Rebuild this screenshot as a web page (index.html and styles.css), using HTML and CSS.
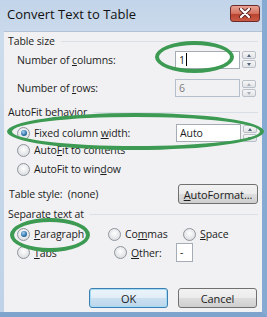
FILE: index.html
```html
<!DOCTYPE html>
<html lang="en">
  <head>
    <meta charset="UTF-8" />
    <title>Convert Text to Table</title>
    <link rel="stylesheet" href="styles.css">
  </head>
  <body>
    <div class="window">
      <div class="titlebar">
        <span class="title">Convert Text to Table</span>
        <span class="close">
          <svg width="16" height="10" viewBox="0 0 16 10">
            <path d="M4 1 L12 9 M12 1 L4 9" stroke="#5a2020" stroke-width="4" stroke-linecap="round" />
            <path d="M4 1 L12 9 M12 1 L4 9" stroke="#ffffff" stroke-width="2.2" stroke-linecap="round" />
          </svg>
        </span>
      </div>

      <div class="client">
        <div class="group h18"><span>Table size</span><i class="rule"></i></div>

        <div class="row h19">
          <span class="label">Number of <u>c</u>olumns:</span>
          <span class="spin">
            <span class="field">1<b class="caret"></b></span>
            <span class="arrows"><span class="up"></span><span class="down"></span></span>
          </span>
        </div>

        <div class="row h18 mt10">
          <span class="label">Number of <u>r</u>ows:</span>
          <span class="spin off">
            <span class="field">6</span>
            <span class="arrows"><span class="up"></span><span class="down"></span></span>
          </span>
        </div>

        <div class="group h18 mt6"><span>AutoFit behavior</span><i class="rule"></i></div>

        <div class="row h18 mt3">
          <span class="radio on"></span>
          <span class="opt">Fixed column <u>w</u>idth:</span>
          <span class="spin wide">
            <span class="field">Auto</span>
            <span class="arrows"><span class="up"></span><span class="down"></span></span>
          </span>
        </div>
        <div class="row h16">
          <span class="radio"></span>
          <span class="opt">Auto<u>F</u>it to contents</span>
        </div>
        <div class="row h16 mt3">
          <span class="radio"></span>
          <span class="opt">AutoFit to win<u>d</u>ow</span>
        </div>

        <div class="row h20 mt7 style-row">
          <span class="plain">Table style:&nbsp; (none)</span>
          <span class="button small"><u>A</u>utoFormat...</span>
        </div>

        <div class="group h16 mt2"><span>Separate text at</span><i class="rule"></i></div>

        <div class="row h18 mt3">
          <span class="cell c1"><span class="radio on"></span><span class="opt"><u>P</u>aragraph</span></span>
          <span class="cell c2"><span class="radio"></span><span class="opt">Co<u>m</u>mas</span></span>
          <span class="cell"><span class="radio"></span><span class="opt"><u>S</u>pace</span></span>
        </div>
        <div class="row h19">
          <span class="cell c1"><span class="radio"></span><span class="opt"><u>T</u>abs</span></span>
          <span class="cell c2"><span class="radio"></span><span class="opt"><u>O</u>ther:</span></span>
          <span class="other">-</span>
        </div>

        <div class="buttons">
          <span class="button default">OK</span>
          <span class="button">Cancel</span>
        </div>
      </div>

      <div class="mark m1"></div>
      <div class="mark m2"></div>
      <div class="mark m3"></div>
    </div>
  </body>
</html>
```

FILE: styles.css
```css
body {
  margin: 0;
  background: #ffffff;
  font-family: "Open Sans", "Noto Sans", sans-serif;
  font-size: 10.5px;
  letter-spacing: -0.1px;
  color: #1c1c1c;
}
u {
  text-decoration: underline;
  text-underline-offset: 1px;
}
.window {
  position: relative;
  width: 267px;
  height: 317px;
  box-sizing: border-box;
  background: linear-gradient(#c2d4e9, #cddcec 40px, #bfd2e7);
  border-right: 5px solid #86aad2;
  border-bottom: 5px solid #7ea4cd;
  display: flex;
  flex-direction: column;
}
.titlebar {
  height: 31px;
  display: flex;
  align-items: center;
  justify-content: space-between;
  padding: 0 2px 0 7px;
}
.title {
  font-size: 13px;
  letter-spacing: 0;
  color: #111;
  margin-top: -3px;
}
.close {
  width: 28px;
  height: 15px;
  margin-top: -5px;
  border: 1px solid #6b2b2b;
  border-radius: 3px;
  background: linear-gradient(#e8a394, #d4725f 50%, #b8412c 51%, #c95a45);
  display: flex;
  align-items: center;
  justify-content: center;
}
.client {
  flex: 1;
  margin-left: 4px;
  background: #f1f1f3;
  border-top: 1px solid #b2c3d6;
  padding: 0 4px 0 4px;
}
.group {
  display: flex;
  align-items: center;
  gap: 6px;
}
.rule {
  flex: 1;
  height: 1px;
  background: #d9dfe6;
}
.row {
  display: flex;
  align-items: center;
  padding-left: 9px;
}
.h16 { height: 16px; }
.h18 { height: 18px; }
.h19 { height: 19px; }
.h20 { height: 20px; }
.mt2 { margin-top: 2px; }
.mt3 { margin-top: 3px; }
.mt6 { margin-top: 6px; }
.mt7 { margin-top: 7px; }
.mt10 { margin-top: 10px; }
.label {
  width: 158px;
}
.spin {
  display: flex;
  align-items: center;
  gap: 2px;
  width: 81px;
}
.spin .field {
  box-sizing: border-box;
  width: 65px;
  height: 18px;
  border: 1px solid #a5acb5;
  background: #ffffff;
  padding-left: 3px;
  line-height: 16px;
  display: flex;
  align-items: center;
}
.spin.off .field {
  color: #7c7c7c;
  background: #f1f1f3;
  border-color: #b6c0cc;
}
.caret {
  display: inline-block;
  width: 1px;
  height: 13px;
  background: #000;
  margin-left: 1px;
}
.arrows {
  display: flex;
  flex-direction: column;
  gap: 1px;
}
.arrows span {
  box-sizing: border-box;
  width: 14px;
  height: 8px;
  border: 1px solid #b9c0c9;
  border-radius: 2px;
  background: linear-gradient(#f6f6f6, #e2e3e6);
  position: relative;
}
.arrows span::after {
  content: "";
  position: absolute;
  left: 4px;
  border-left: 2.5px solid transparent;
  border-right: 2.5px solid transparent;
}
.arrows .up::after {
  top: 2px;
  border-bottom: 3px solid #56657c;
}
.arrows .down::after {
  top: 2px;
  border-top: 3px solid #56657c;
}
.off .arrows span::after {
  border-bottom-color: #a9b1bc;
  border-top-color: #a9b1bc;
}
.radio {
  box-sizing: border-box;
  width: 13px;
  height: 13px;
  border-radius: 50%;
  border: 1px solid #8f959c;
  background: radial-gradient(circle at 50% 40%, #ffffff, #dfe1e4 70%);
  flex: none;
  position: relative;
}
.radio.on::after {
  content: "";
  position: absolute;
  left: 2.5px;
  top: 2.5px;
  width: 6px;
  height: 6px;
  border-radius: 50%;
  background: radial-gradient(circle at 40% 35%, #a6d2f2, #2a6fa8 60%, #17406a);
}
.opt {
  margin-left: 4px;
}
.row .opt + .spin {
  margin-left: auto;
  margin-right: 1px;
}
.style-row {
  padding-left: 1px;
  justify-content: space-between;
}
.button {
  box-sizing: border-box;
  display: flex;
  align-items: center;
  justify-content: center;
  width: 79px;
  height: 20px;
  border: 1px solid #707070;
  border-radius: 3px;
  background: linear-gradient(#f2f2f2, #ebebeb 50%, #dddddd 51%, #cfcfcf);
  font-size: 11px;
}
.button.small {
  width: 80px;
}
.button.default {
  border-color: #3c7fb1;
  box-shadow: inset 0 0 0 1px #a6dbf5;
  background: linear-gradient(#ecf4fa, #e1edf7 50%, #cae0f1 51%, #bcd6ea);
}
.cell {
  display: flex;
  align-items: center;
  width: 80px;
}
.cell.c1 {
  width: 97px;
}
.other {
  box-sizing: border-box;
  width: 17px;
  height: 19px;
  border: 1px solid #a5acb5;
  background: #ffffff;
  padding-left: 3px;
  margin-left: -18px;
  line-height: 16px;
}
.buttons {
  display: flex;
  gap: 10px;
  margin-top: 26px;
  padding-left: 81px;
}
.mark {
  position: absolute;
  box-sizing: border-box;
  border: 4px solid #3c9a52;
  border-radius: 50%;
}
.m1 {
  left: 155px;
  top: 41px;
  width: 79px;
  height: 32px;
}
.m2 {
  left: 7px;
  top: 113px;
  width: 257px;
  height: 37px;
  border-width: 4px 4px 4px 5px;
}
.m3 {
  left: 10px;
  top: 218px;
  width: 80px;
  height: 34px;
}
```
